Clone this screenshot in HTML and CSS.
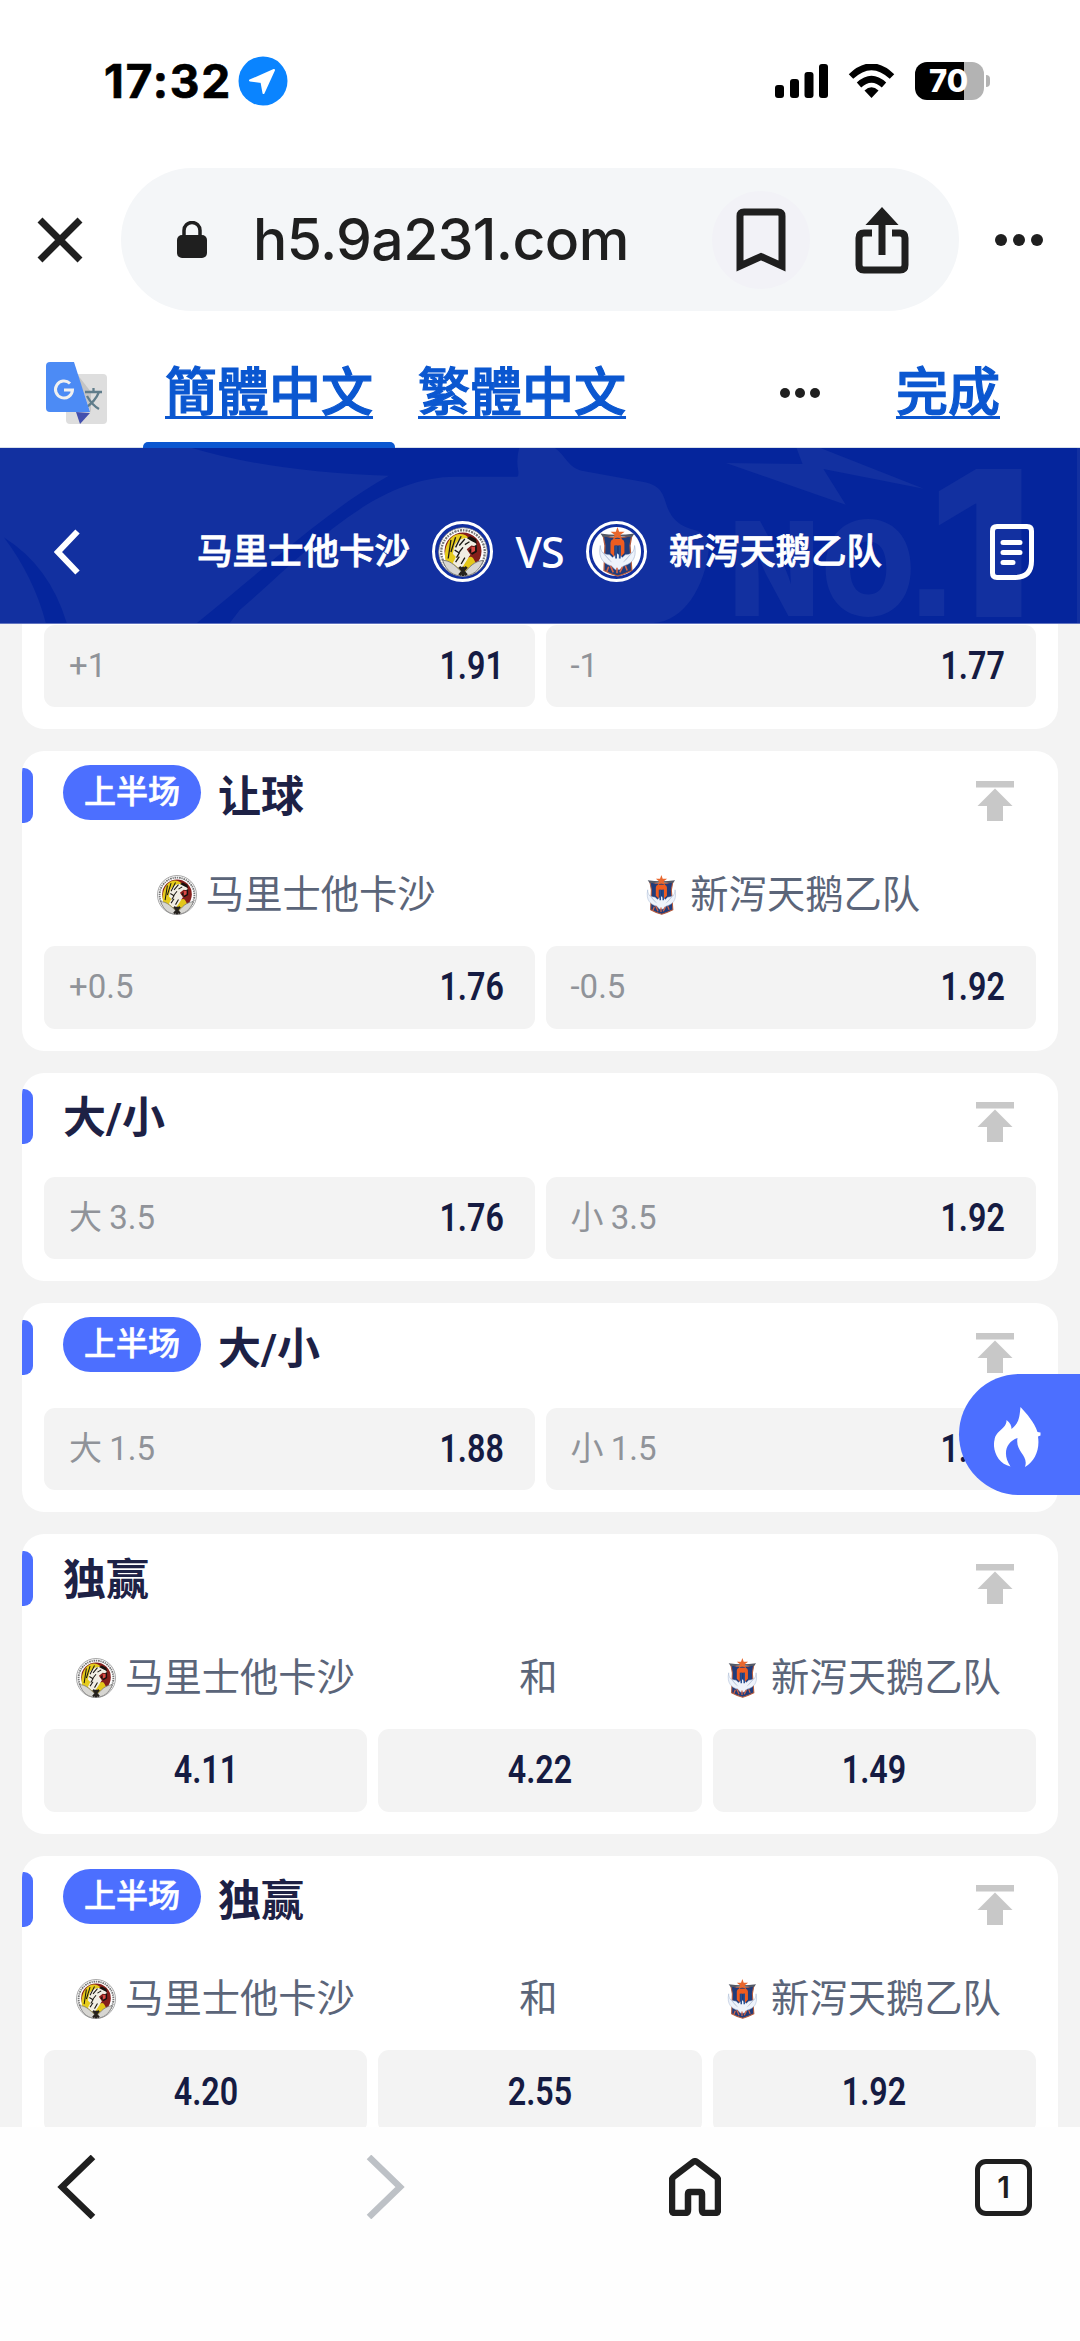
FILE: index.html
```html
<!DOCTYPE html>
<html lang="zh-CN">
<head>
	<meta charset="utf-8">
	<title>马里士他卡沙 VS 新泻天鹅乙队</title>

	<link rel="stylesheet" href="styles.css">
</head>
<body>

	<!-- shared icons -->
	<svg class="sprite" width="0" height="0">
		<symbol id="tiger" viewBox="0 0 54 54">
			<circle cx="27" cy="27" r="26.3" fill="#fff" stroke="#888" stroke-width="1"/>
			<circle cx="27" cy="27" r="23.500" fill="none" stroke="#777" stroke-width="2.500" stroke-dasharray="1.6 1.1 2.3 1" pathLength="144"/>
			<circle cx="27" cy="26" r="20" fill="#851f1b"/>
			<path d="M9 39C5 27 10 13 18 9c6-3 13-1 16 4l-7 9 7 14-9 12Z" fill="#e5cb1c"/>
			<path d="M18 20c5-9 15-10 22-5l2 6-6-1-5 4 4 6-6 8-7-3-6-6Z" fill="#f1eee4"/>
			<path d="M20 31l-4 8 8 7 8-6 1-8-5-3Z" fill="#f1eee4"/>
			<path d="M14 14l-3 20M19 11l-5 16M25 10l-6 12M29 13l-6 7M18 25l5 3-3 5M23 32l-4 6M29 33l-4 7M27 22l-4 5M34 16l-5 3" fill="none" stroke="#1b1813" stroke-width="1.400"/>
			<path d="m31 12 4-2 6 3 1 5-6-3M38 21l4-2v8l-5 3-4-4" fill="#17110e"/>
			<path d="m36 22 4-1v5l-4 2Z" fill="#dc4b46"/>
			<path d="M33 33c5-3 6 4 8 6L29 49l-3-5Z" fill="#e4c719"/>
			<path d="M5 36c7 0 12 4 20 12l2 3c7-8 12-14 22-15-4 11-12 17-22 17S9 48 5 36Z" fill="#d7d6d2" stroke="#777" stroke-width="1"/>
			<path d="m23 43 8 9M31 43l-8 9M27 43v10" stroke="#25211d" stroke-width="3"/>
		</symbol>
		<symbol id="swan" viewBox="0 0 54 54">
			<path d="M12 9q15 5 31 0l-2 11 2 27q-8 4-15 6-8-2-15-6l1-27Z" fill="#203c7b" stroke="#b65b3d" stroke-width="1.4"/>
			<path d="M9 7q18 3 37 0l-3 4q-15-2-31 0Z" fill="#555966"/>
			<path d="m27.500 0 1.800 5h6l-4.600 3.500 1.800 5.500-5-3.500-5 3.500 1.800-5.500L20 5h5.700Z" fill="#e9672d"/>
			<path d="M9 20c0 8 5 10 10 10l3 3 5.500-4 5.500 4 3-3c5 0 10-2 10-10 3 16-5 20-12 22l-4 4h-5l-4-4C14 40 6 35 9 20Z" fill="#eef3fb" stroke="#a6b7d3" stroke-width=".7"/>
			<path d="M20 28V17q0-3 3-4h9q3 1 3 4v11l-4 4V20h-7v12Z" fill="#ef5c20"/>
			<path d="M25 20h2v14h-2ZM29 20h2v14h-2Z" fill="#284f91"/>
			<path d="m11 27 8 9M14 30l7 8M44 27l-8 9M41 30l-7 8" stroke="#b5c1d7" stroke-width=".8"/>
			<path d="m18 43-2 5M20 42l3 7M27 44v6M33 43l-3 6M36 42l2 5" fill="none" stroke="#d66444" stroke-width="1.7"/>
		</symbol>
		<symbol id="to-top" viewBox="0 0 40 41">
			<path d="M1 1h38v6.500H1ZM20 8.500 37.500 26H28v15H12V26H2.500Z" fill="#c8c8c8"/>
		</symbol>
	</svg>

	<div class="status">
		<span class="time">17:32</span>
		<svg class="location" viewBox="0 0 50 50">
			<circle cx="25" cy="25" r="24.500" fill="#0a84ff"/>
			<path d="M36 14 25.500 37l-2-11L12 24.500Z" fill="#fff" stroke="#fff" stroke-width="2" stroke-linejoin="round"/>
		</svg>
		<svg class="signal" viewBox="0 0 54 34">
			<rect x="0" y="21" width="9" height="13" rx="3"/>
			<rect x="15" y="15" width="9" height="19" rx="3"/>
			<rect x="29.500" y="8" width="9" height="26" rx="3"/>
			<rect x="44" y="0" width="9" height="34" rx="3"/>
		</svg>
		<svg class="wifi" viewBox="0 0 47 34">
			<path d="M3 12.500Q23.500-7 44 12.500M11 21q12.500-11.500 25 0" fill="none" stroke="#000" stroke-width="6.500"/>
			<path d="m23.500 34-7-7.500q7-6.500 14 0Z"/>
		</svg>
		<div class="battery"><span>70</span></div>
	</div>

	<div class="address">
		<svg class="close" viewBox="0 0 46 46"><path d="m3 3 40 40M43 3 3 43"/></svg>
		<div class="url">
			<svg class="lock" viewBox="0 0 30 38">
				<rect x="0" y="14" width="30" height="23" rx="5" fill="#1f1f1f"/>
				<path d="M7 16V9.500a8 8 0 0 1 16 0V16" fill="none" stroke="#1f1f1f" stroke-width="3.500"/>
			</svg>
			<span class="host">h5.9a231.com</span>
			<span class="bookmark">
				<svg width="50" height="64" viewBox="0 0 50 64"><path d="M4 58V8q0-4 4-4h34q4 0 4 4v50L25 48.500Z"/></svg>
			</span>
			<svg class="share" viewBox="0 0 54 68">
				<path d="M17 27H9q-5 0-5 5v27q0 5 5 5h36q5 0 5-5V32q0-5-5-5h-8M27 49V8"/>
				<path d="m15 17 12-13 12 13Z"/>
			</svg>
		</div>
		<svg class="more" viewBox="0 0 48 12"><circle cx="6" cy="6" r="6"/><circle cx="24" cy="6" r="6"/><circle cx="42" cy="6" r="6"/></svg>
	</div>

	<div class="translate">
		<svg class="gtrans" viewBox="0 0 62 62">
			<rect x="20" y="12" width="41" height="50" rx="4" fill="#dedede"/>
			<path d="M30 50 44 51 34 62Z" fill="#4350ae"/>
			<path d="M31 12 45 51V30Z" fill="#c4c4c4"/>
			<path d="M39 30h17M47.500 26v4M53 30q-4 10-14 16M41 34q5 9 12 13" fill="none" stroke="#607d8b" stroke-width="2.300"/>
			<path d="M4 0h24l16 50H4q-4 0-4-4V4q0-4 4-4Z" fill="#4c8bf5"/>
			<path d="M24 21.500a8.500 8.500 0 1 0 2.500 6.500H18" fill="none" stroke="#f0f0f0" stroke-width="3"/>
		</svg>
		<a class="lang active">簡體中文</a>
		<a class="lang">繁體中文</a>
		<svg class="more-small" viewBox="0 0 48 12"><circle cx="6" cy="6" r="6"/><circle cx="24" cy="6" r="6"/><circle cx="42" cy="6" r="6"/></svg>
		<a class="done">完成</a>
	</div>

	<header class="match">
		<svg class="match-bg" viewBox="0 0 1080 176">
			<g fill="#05259c">
				<path d="M1 90Q31 130 43 176H64Q47 119 1 90Z"/>
				<path d="M190 0Q270 24 388 28C330 60 270 115 195 176H228L238 163C300 110 370 29 455 29H517Q519 28 518 22 516 12 519 0Z"/>
				<path d="M555 0C566 8 568 19 582 23L643 34C673 39 660 60 679 75 690 85 710 80 710 100 706 140 685 174 654 176H1080V0Z"/>
			</g>
			<g class="no1">
				<path d="m798 0 6 16-77-1 120.500 42L825 21l101 20L822 0Z"/>
				<text x="731" y="169" font-size="132" textLength="89" lengthAdjust="spacingAndGlyphs">N</text>
				<text x="823" y="169" font-size="132" textLength="94" lengthAdjust="spacingAndGlyphs">O</text>
				<rect x="921.500" y="142" width="25" height="27"/>
				<text x="931" y="170" font-size="205" textLength="104" lengthAdjust="spacingAndGlyphs">1</text>
			</g>
		</svg>
		<svg class="back" viewBox="0 0 26 46"><path d="M23.500 2.500 4 23l19.500 20.500"/></svg>
		<div class="versus">
			<span>马里士他卡沙</span>
			<i class="crest"><svg><use href="#tiger"/></svg></i>
			<b>VS</b>
			<i class="crest"><svg><use href="#swan"/></svg></i>
			<span>新泻天鹅乙队</span>
		</div>
		<svg class="slip" viewBox="0 0 44 56">
			<path d="M7 2.500h30q4.500 0 4.500 4.500v30q0 16-16 16.500H7Q2.500 53.500 2.500 49V7q0-4.500 4.500-4.500Z"/>
			<path d="M13 18.500h17M13 28.500h17M13 38.500h10"/>
		</svg>
	</header>

	<main>
		<section class="card first">
			<div class="odds">
				<div class="cell"><span>+1</span><b>1.91</b></div>
				<div class="cell"><span>-1</span><b>1.77</b></div>
			</div>
		</section>

		<section class="card">
			<div class="head"><em>上半场</em><h2>让球</h2><svg><use href="#to-top"/></svg></div>
			<div class="teams">
				<div><svg><use href="#tiger"/></svg>马里士他卡沙</div>
				<div><svg><use href="#swan"/></svg>新泻天鹅乙队</div>
			</div>
			<div class="odds">
				<div class="cell"><span>+0.5</span><b>1.76</b></div>
				<div class="cell"><span>-0.5</span><b>1.92</b></div>
			</div>
		</section>

		<section class="card">
			<div class="head"><h2>大/小</h2><svg><use href="#to-top"/></svg></div>
			<div class="odds">
				<div class="cell"><span>大 3.5</span><b>1.76</b></div>
				<div class="cell"><span>小 3.5</span><b>1.92</b></div>
			</div>
		</section>

		<section class="card">
			<div class="head"><em>上半场</em><h2>大/小</h2><svg><use href="#to-top"/></svg></div>
			<div class="odds">
				<div class="cell"><span>大 1.5</span><b>1.88</b></div>
				<div class="cell"><span>小 1.5</span><b>1.80</b></div>
			</div>
		</section>

		<section class="card">
			<div class="head"><h2>独赢</h2><svg><use href="#to-top"/></svg></div>
			<div class="teams">
				<div><svg><use href="#tiger"/></svg>马里士他卡沙</div>
				<div>和</div>
				<div><svg><use href="#swan"/></svg>新泻天鹅乙队</div>
			</div>
			<div class="odds three">
				<div class="cell"><b>4.11</b></div>
				<div class="cell"><b>4.22</b></div>
				<div class="cell"><b>1.49</b></div>
			</div>
		</section>

		<section class="card">
			<div class="head"><em>上半场</em><h2>独赢</h2><svg><use href="#to-top"/></svg></div>
			<div class="teams">
				<div><svg><use href="#tiger"/></svg>马里士他卡沙</div>
				<div>和</div>
				<div><svg><use href="#swan"/></svg>新泻天鹅乙队</div>
			</div>
			<div class="odds three">
				<div class="cell"><b>4.20</b></div>
				<div class="cell"><b>2.55</b></div>
				<div class="cell"><b>1.92</b></div>
			</div>
		</section>
	</main>

	<!-- floating hot button -->
	<div class="hot">
		<svg viewBox="0 0 47 60">
			<path fill="#fff" d="M26.500 0C33 7 40 15 43.500 25l3 .5v3l-2.500 1c2 13-3 25-13 30.500 4-12-10-15-7.500-29C12 35 8 47 16.500 59.500 4 57-2 43 .5 33 2 23 13 22 12.500 13c4 3 5 6 5 9 8-6 8-13 9-22Z"/>
		</svg>
	</div>

	<nav>
		<svg class="nav-back" viewBox="0 0 40 64"><path d="M36 2 5 32l31 30"/></svg>
		<svg class="nav-fwd" viewBox="0 0 40 64"><path d="m4 2 31 30L4 62"/></svg>
		<svg class="nav-home" viewBox="0 0 52 58"><path d="M3 52V22q0-2 2-3.500L24 4q2-1.500 4 0l19 14.500q2 1.500 2 3.500v30q0 3-3 3H36q-3 0-3-3V36q0-2-2-2H21q-2 0-2 2v16q0 3-3 3H6q-3 0-3-3Z"/></svg>
		<span class="tabs">1</span>
	</nav>

</body>
</html>
```
FILE: styles.css
```css
* {
	box-sizing: border-box;
}
body {
	margin: 0;
	width: 1080px;
	height: 2341px;
	overflow: hidden;
	display: flex;
	flex-direction: column;
	position: relative;
	background: #fff;
	font-family: Roboto, "Noto Sans CJK SC", sans-serif;
}
svg {
	display: block;
	flex: none;
}
.sprite {
	position: absolute;
}

/* phone status bar */
.status {
	height: 168px;
	padding: 0 90px 6px 104px;
	display: flex;
	align-items: center;
}
.time {
	width: 134px;
	font: 700 46px/50px Inter, sans-serif;
	letter-spacing: 1.8px;
	-webkit-text-stroke: .7px #000;
}
.location {
	width: 50px;
	height: 50px;
	margin-right: auto;
}
.signal {
	width: 54px;
	height: 34px;
	margin-right: 19px;
}
.wifi {
	width: 47px;
	height: 34px;
	margin-right: 20px;
}
.battery {
	position: relative;
	width: 69px;
	height: 38px;
	margin-right: 6px;
	border-radius: 12px;
	background: linear-gradient(90deg, #000 49px, #b3b3b3 49px);
	color: #fff;
	font: 800 31px/38px Inter, sans-serif;
	text-align: center;
}
.battery span {
	margin-left: -2px;
}
.battery:after {
	content: "";
	position: absolute;
	right: -6px;
	top: 13px;
	width: 4px;
	height: 12px;
	border-radius: 0 5px 5px 0;
	background: #b3b3b3;
}

/* browser address bar */
.address {
	height: 143px;
	padding: 0 37px 0 37px;
	display: flex;
	align-items: center;
}
.address svg path {
	fill: none;
	stroke: #1f1f1f;
	stroke-width: 7;
}
.close {
	width: 46px;
	height: 46px;
}
.address .lock path {
	stroke-width: 3.500;
}
.url {
	width: 838px;
	height: 143px;
	margin: 0 36px 0 38px;
	padding-left: 56px;
	display: flex;
	align-items: center;
	border-radius: 72px;
	background: #f4f6f8;
}
.lock {
	width: 30px;
	height: 38px;
}
.host {
	width: 459px;
	margin-left: 46px;
	color: #1f1f1f;
	font: 500 57px/70px Inter, sans-serif;
	letter-spacing: -0.6px;
}
.bookmark {
	display: flex;
	align-items: center;
	justify-content: center;
	width: 98px;
	height: 98px;
	margin-right: 45px;
	border-radius: 50%;
	background: #f2f2f7;
}
.share {
	width: 54px;
	height: 68px;
}
.address .share path:last-child {
	fill: #1f1f1f;
	stroke-width: 4;
}
.more {
	width: 48px;
	height: 12px;
	fill: #1f1f1f;
}

/* translate bar */
.translate {
	height: 137px;
	padding: 20px 80px 0 46px;
	display: flex;
	align-items: center;
	border-bottom: 1px solid #d8e0ea;
}
.gtrans {
	width: 62px;
	height: 62px;
	margin: 8px 35px 0 0;
}
.lang,
.done {
	color: #0b57d0;
	font: 500 52px/60px "Noto Sans CJK TC", sans-serif;
	-webkit-text-stroke: 1.200px #0b57d0;
	text-decoration: underline;
	text-decoration-thickness: 3px;
	text-underline-offset: 5px;
}
.lang {
	position: relative;
	padding: 0 22px;
}
.lang + .lang {
	margin-left: 1px;
}
.active:after {
	content: "";
	position: absolute;
	left: 0;
	right: 0;
	bottom: -29px;
	height: 6px;
	border-radius: 5px 5px 0 0;
	background: #0b57d0;
}
.more-small {
	width: 40px;
	height: 10px;
	margin-top: 7px;
	margin-left: auto;
	margin-right: 76px;
	fill: #1f1f1f;
}

/* match header */
.match {
	position: relative;
	height: 176px;
	padding: 32px 46px 0 54px;
	display: flex;
	align-items: center;
	justify-content: space-between;
	background: #1230a0;
	border-bottom: 1px solid #6174c0;
	color: #fff;
}
.match-bg {
	position: absolute;
	left: 0;
	top: 0;
	width: 1080px;
	height: 175px;
}
.no1 {
	fill: #1230a0;
	font-family: Inter, sans-serif;
	font-weight: 900;
}
.back,
.versus,
.slip {
	position: relative;
	fill: none;
	stroke: #fff;
}
.back {
	width: 26px;
	height: 46px;
	stroke-width: 6;
}
.slip {
	width: 44px;
	height: 56px;
	stroke-width: 5;
	stroke-linecap: round;
}
.versus {
	display: flex;
	align-items: center;
	margin-left: 9px;
	stroke: none;
	font-weight: 500;
	font-size: 35.500px;
	line-height: 50px;
}
.versus span {
	-webkit-text-stroke: .8px #fff;
}
.crest {
	display: flex;
	align-items: center;
	justify-content: center;
	width: 61px;
	height: 61px;
	margin: 0 22px;
	border: 3px solid #fff;
	border-radius: 50%;
}
.crest svg {
	width: 50px;
	height: 50px;
	border-radius: 50%;
}
.crest:last-of-type {
	background: radial-gradient(#fff 24px, transparent 25px);
}
.versus b {
	width: 49px;
	font: 500 43px/50px "Noto Sans", sans-serif;
	letter-spacing: -1px;
	text-align: center;
}

/* market list */
main {
	flex: 1;
	min-height: 0;
	overflow: hidden;
	padding: 0 22px;
	background: #f3f3f3;
}
.card {
	margin-bottom: 22px;
	padding: 0 22px 22px;
	border-radius: 22px;
	background: #fff;
	overflow: hidden;
}
.first {
	padding-top: 1px;
	border-radius: 0 0 22px 22px;
}
.head {
	position: relative;
	height: 104.400px;
	padding: 13.500px 21px 0 19px;
	display: flex;
	align-items: flex-start;
}
.head:before {
	content: "";
	position: absolute;
	left: -22px;
	top: 16.500px;
	width: 11px;
	height: 55px;
	border-radius: 0 9px 9px 0;
	background: #4c6fff;
}
.head em {
	width: 138px;
	height: 55px;
	margin-right: 17px;
	border-radius: 28px;
	background: #4c6fff;
	color: #fff;
	font-style: normal;
	font-weight: 500;
	font-size: 32px;
	line-height: 54px;
	text-align: center;
	-webkit-text-stroke: .6px #fff;
}
.head h2 {
	margin: 2px 0 0;
	color: #1d2145;
	font-weight: 700;
	font-size: 43px;
	line-height: 60px;
}
.head svg {
	width: 40px;
	height: 41px;
	margin: 15px 0 0 auto;
}
.teams {
	height: 90.500px;
	padding: 0 10px 12px;
	display: flex;
	align-items: center;
	color: #5b6579;
	font-size: 38.300px;
	line-height: 50px;
}
.teams div {
	flex: 1;
	display: flex;
	align-items: center;
	justify-content: center;
}
.teams svg {
	width: 40px;
	height: 40px;
	margin-right: 9px;
}
.teams div:last-child {
	padding-right: 3px;
}
.odds {
	display: grid;
	grid-template-columns: 1fr 1fr;
	gap: 11px;
}
.three {
	grid-template-columns: 1fr 1fr 1fr;
}
.cell {
	height: 82.400px;
	padding: 0 31px 0 25px;
	display: flex;
	align-items: center;
	justify-content: space-between;
	border-radius: 11px;
	background: #f3f3f3;
}
.cell span {
	color: #909399;
	font-size: 33px;
	line-height: 40px;
	word-spacing: -1px;
}
.cell b {
	color: #151b42;
	font-weight: 600;
	font-size: 38px;
	line-height: 44px;
	transform: scaleX(.85);
	transform-origin: right center;
}
.three .cell {
	padding: 0;
	justify-content: center;
}
.three b {
	transform-origin: center;
}

.hot {
	position: absolute;
	right: 0;
	top: 1374px;
	width: 121px;
	height: 121px;
	padding: 33px 0 0 35px;
	border-radius: 61px 0 0 61px;
	background: #4c6fff;
}
.hot svg {
	width: 47px;
	height: 60px;
}

/* browser toolbar */
nav {
	height: 214px;
	padding: 28px 48px 0 57px;
	display: flex;
	align-items: flex-start;
	background: #fefefe;
}
nav path {
	fill: none;
	stroke: #1f1f1f;
	stroke-width: 6.500;
}
.nav-back,
.nav-fwd {
	width: 40px;
	height: 64px;
}
.nav-fwd {
	margin-left: 268px;
}
.nav-fwd path {
	stroke: #bdc1c6;
}
.nav-home {
	width: 52px;
	height: 58px;
	margin-top: 3px;
	margin-left: 264px;
}
.tabs {
	width: 57px;
	height: 57px;
	margin-top: 4px;
	margin-left: auto;
	border: 5px solid #1f1f1f;
	border-radius: 11px;
	color: #1f1f1f;
	font: 600 30px/47px Inter, sans-serif;
	text-align: center;
}
```
